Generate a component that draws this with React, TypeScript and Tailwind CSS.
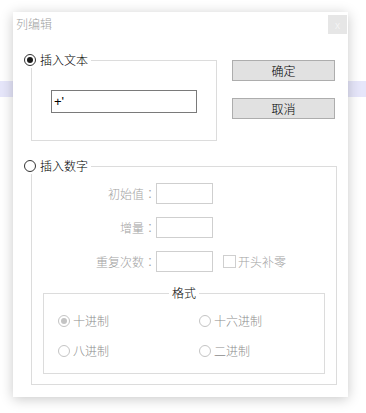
import React from "react";

const font = { fontFamily: '"Noto Sans CJK SC", "Noto Sans", sans-serif' };
const colon = { fontFamily: '"Noto Sans CJK TC", sans-serif' };

function Radio({ checked, disabled }: { checked?: boolean; disabled?: boolean }) {
  return (
    <span
      className={
        "flex h-[12px] w-[12px] shrink-0 items-center justify-center rounded-full border bg-white " +
        (disabled ? "border-[#c4c4c4]" : "border-[#333333]")
      }
    >
      {checked && (
        <span
          className={
            "h-[6px] w-[6px] rounded-full " + (disabled ? "bg-[#c4c4c4]" : "bg-[#1a1a1a]")
          }
        />
      )}
    </span>
  );
}

function Row({ label, children }: { label: string; children?: React.ReactNode }) {
  return (
    <div className="flex h-[21px] items-center">
      <div className="w-[124px] text-right text-[12px] font-light leading-[16px] text-[#a3a3a3]">
        {label}
        <span style={colon}>：</span>
      </div>
      <div className="h-[21px] w-[57px] border border-[#cfcfcf] bg-white" />
      {children}
    </div>
  );
}

export default function App() {
  return (
    <div className="relative h-[413px] w-[366px] overflow-hidden bg-white font-light" style={font}>
      <div className="mt-[81px] h-[16px] w-full bg-[#e6e6fa]" />
      <div className="absolute left-[13px] top-[12px] flex h-[385px] w-[335px] flex-col bg-white shadow-[0_2px_12px_rgba(0,0,0,0.22)]">
        {/* title bar */}
        <div className="flex h-[25px] items-start justify-between">
          <div className="pl-[3px] pt-[4px] text-[12px] leading-[16px] text-[#a0a0a0]">列编辑</div>
          <div className="mr-[1px] mt-[3px] flex h-[19px] w-[19px] items-center justify-center bg-[#e6e6e6] text-[11px] leading-none text-[#f8f8f8]">
            x
          </div>
        </div>

        {/* row 1 */}
        <div className="ml-[18px] mt-[23px] flex items-start">
          <div className="relative h-[81px] w-[186px] border border-[#dcdcdc]">
            <div className="absolute left-[-8px] top-[-9px] flex h-[16px] items-center gap-[4px] bg-white pr-[3px]">
              <Radio checked />
              <span className="text-[12px] leading-[16px] text-black">插入文本</span>
            </div>
            <div
              className="ml-[19px] mt-[29px] flex h-[23px] w-[146px] items-center border border-[#7a7a7a] bg-white pl-[2px] text-[13px] font-normal text-black"
              style={{ fontFamily: '"Liberation Sans", sans-serif' }}
            >
              +'
            </div>
          </div>
          <div className="ml-[15px] flex flex-col gap-[17px]">
            <div className="flex h-[21px] w-[103px] items-center justify-center border border-[#adadad] bg-[#e1e1e1] text-[12px] leading-[16px] text-black">
              确定
            </div>
            <div className="flex h-[21px] w-[103px] items-center justify-center border border-[#adadad] bg-[#e1e1e1] text-[12px] leading-[16px] text-black">
              取消
            </div>
          </div>
        </div>

        {/* group 2 */}
        <div className="relative ml-[18px] mt-[25px] w-[306px] border border-[#dcdcdc]">
          <div className="absolute left-[-8px] top-[-9px] flex h-[16px] items-center gap-[4px] bg-white pr-[3px]">
            <Radio />
            <span className="text-[12px] leading-[16px] text-black">插入数字</span>
          </div>
          <div className="mt-[16px] flex flex-col gap-[13px]">
            <Row label="初始值" />
            <Row label="增量" />
            <Row label="重复次数">
              <div className="ml-[10px] flex items-center gap-[2px]">
                <span className="h-[13px] w-[13px] border border-[#cfcfcf] bg-white" />
                <span className="text-[12px] leading-[16px] text-[#a3a3a3]">开头补零</span>
              </div>
            </Row>
          </div>
          <div className="relative mx-[11px] mb-[10px] mt-[21px] h-[81px] border border-[#dcdcdc]">
            <div className="absolute left-1/2 top-[-9px] flex h-[16px] -translate-x-1/2 items-center bg-white px-[3px]">
              <span className="text-[12px] leading-[16px] text-black">格式</span>
            </div>
            <div className="ml-[14px] mt-[19px] grid grid-cols-[141px_120px] gap-y-[14px]">
              <div className="flex h-[16px] items-center gap-[3px]">
                <Radio checked disabled />
                <span className="text-[12px] leading-[16px] text-[#8c8c8c]">十进制</span>
              </div>
              <div className="flex h-[16px] items-center gap-[3px]">
                <Radio disabled />
                <span className="text-[12px] leading-[16px] text-[#8c8c8c]">十六进制</span>
              </div>
              <div className="flex h-[16px] items-center gap-[3px]">
                <Radio disabled />
                <span className="text-[12px] leading-[16px] text-[#8c8c8c]">八进制</span>
              </div>
              <div className="flex h-[16px] items-center gap-[3px]">
                <Radio disabled />
                <span className="text-[12px] leading-[16px] text-[#8c8c8c]">二进制</span>
              </div>
            </div>
          </div>
        </div>
      </div>
    </div>
  );
}
